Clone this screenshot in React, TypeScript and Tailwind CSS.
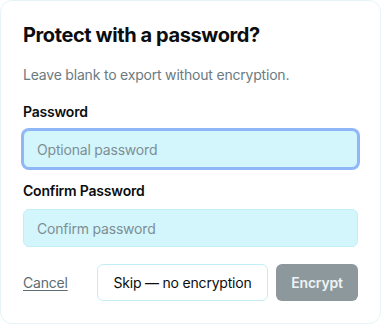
import { useEffect, useRef } from "react";

export default function App() {
  const inputRef = useRef<HTMLInputElement>(null);

  useEffect(() => {
    inputRef.current?.focus();
  }, []);

  return (
    <div className="h-[324px] w-[381px] bg-white" style={{ fontFamily: "Inter, 'Noto Sans', sans-serif" }}>
      <div className="flex h-full flex-col rounded-xl border border-[#e6f4f7] bg-white px-[22px] pt-[20px] tracking-[-0.2px]">
        <h2 className="text-[20px] font-bold leading-[28px] tracking-[-0.4px] text-[#0b0d0e]">Protect with a password?</h2>
        <p className="mt-[16px] text-[14px] leading-[20px] text-[#6a7b81]">Leave blank to export without encryption.</p>

        <label className="mt-[17px] text-[14px] font-semibold leading-[20px] text-[#0b0d0e]">Password</label>
        <input
          ref={inputRef}
          type="password"
          placeholder="Optional password"
          className="mt-[8px] h-[38px] w-full rounded-[6px] border border-[#8fb6f6] bg-[#d3f6fc] px-[13px] text-[14px] tracking-[-0.2px] text-[#0b0d0e] outline-none ring-2 ring-[#8fb6f6] placeholder:text-[#7d8e94]"
        />

        <label className="mt-[13px] text-[14px] font-semibold leading-[20px] text-[#0b0d0e]">Confirm Password</label>
        <input
          type="password"
          placeholder="Confirm password"
          className="mt-[8px] h-[38px] w-full rounded-[6px] border border-[#c4eef5] bg-[#d3f6fc] px-[13px] text-[14px] tracking-[-0.2px] text-[#0b0d0e] outline-none placeholder:text-[#7d8e94]"
        />

        <div className="mt-[17px] flex items-center justify-between">
          <button type="button" className="text-[14px] leading-[20px] text-[#5d6d73] underline underline-offset-2">
            Cancel
          </button>
          <div className="flex items-center gap-[8px]">
            <button
              type="button"
              className="h-[37px] w-[171px] rounded-[6px] border border-[#c4eef5] bg-white text-[14px] text-[#0b0d0e]"
            >
              Skip — no encryption
            </button>
            <button
              type="button"
              className="h-[37px] w-[82px] rounded-[6px] bg-[#8d989c] text-[14px] font-semibold text-[#eef3f5]"
            >
              Encrypt
            </button>
          </div>
        </div>
      </div>
    </div>
  );
}
